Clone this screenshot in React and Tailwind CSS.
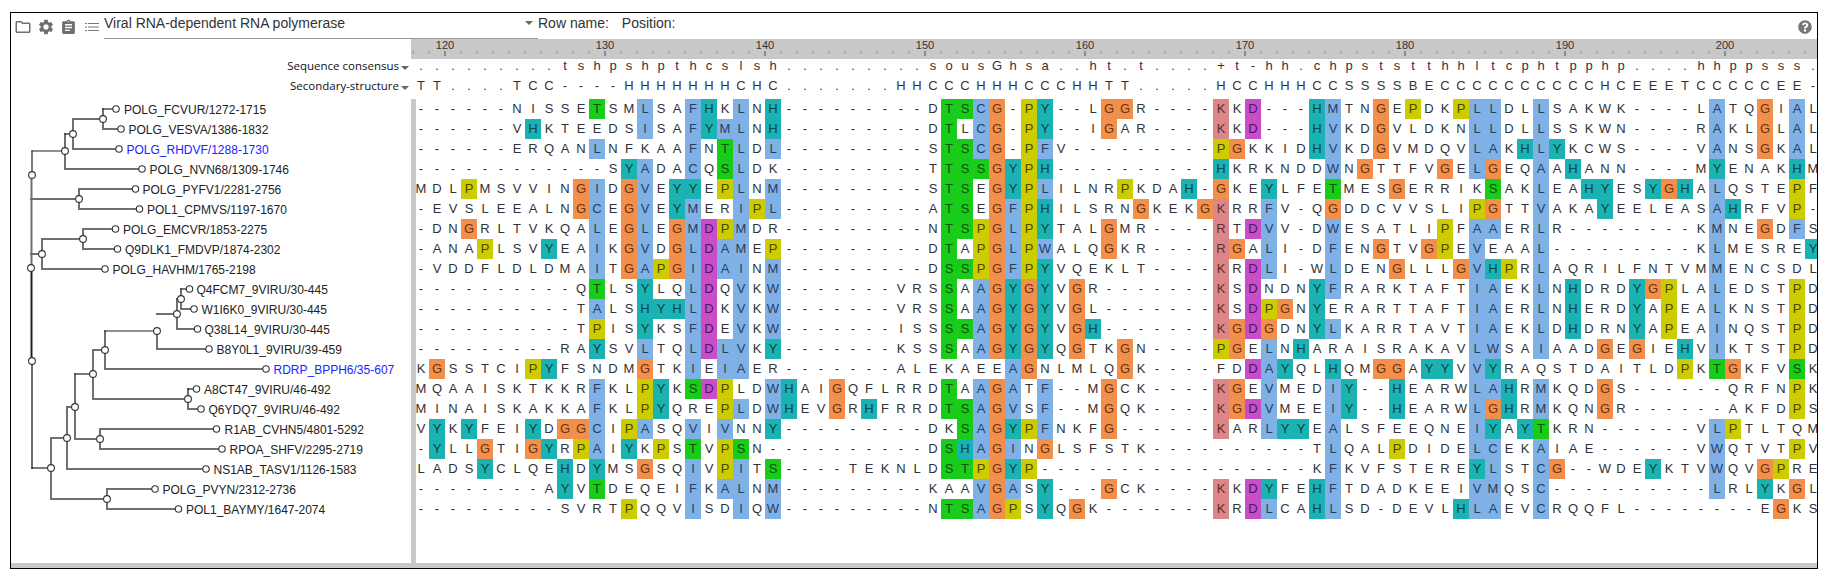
import { MdOutlineFolder, MdSettings, MdAssignment } from 'react-icons/md';
import { FaQuestionCircle } from 'react-icons/fa';

const CONSENSUS = '.........tshpshpthcslsh.........sousGhsa..ht.t....+t-hh.chpststthhltcphtpphp....hhppsss.';
const SECONDARY = 'TT....TCC----HHHHHHHCHC.......HHCCCHHHCCCHHTT.....HCCHHHCCSSSSBECCCCCCCCCCHCEEETCCCCCEE-';

// bg + letter colour per residue class
const SWATCH = {
  b: 'bg-[#80b1e6] text-[#26415f]',
  t: 'bg-[#1ab2b2] text-[#064848]',
  g: 'bg-[#19cc19] text-[#075407]',
  o: 'bg-[#f28f4a] text-[#6b3312]',
  y: 'bg-[#cccc00] text-[#4a4a00]',
  p: 'bg-[#de8588] text-[#5c2f30]',
  m: 'bg-[#c94cc9] text-[#4f1a4f]',
};

const ROWS = [
  { seq: '------NISSETSMLSAFHKLNH---------DTSCG-PY--LGGR----KKD---HMTNGEPDKPLLDLLSAKWK----LATQGIAL', g: [11, 33, 34], b: [14, 17, 20, 35, 57, 66, 67, 70, 81, 86], t: [18, 22, 39, 56], o: [36, 43, 44, 60, 84], y: [38, 62, 65], p: [50], m: [52] },
  { seq: '------VHKTEEDSISAFYMLNH---------DTLCG-PY--IGAR----KKD---HVKDGVLDKNLLDLLSSKWN----RAKLGLAL', g: [33], b: [14, 17, 19, 20, 35, 57, 66, 67, 70, 81, 86], t: [7, 18, 22, 39, 56], o: [36, 43, 60, 84], y: [38], p: [50], m: [52] },
  { seq: '------ERQANLNFKAAFNTLDL---------STSCG-PFV---------PGKKIDHVKDGVMDQVLAKHLYKCWS----VANSGKAL', g: [19, 33, 34], b: [11, 17, 20, 22, 35, 39, 57, 66, 67, 70, 81, 86], t: [56, 69, 71], o: [36, 51, 60, 84], y: [38, 50] },
  { seq: '------------SYADACQSLDK---------TTSSGYPH----------HKRKNDDWNGTTFVGELGEQAAHANN----MYENAKHM', g: [19, 33, 34, 35], b: [14, 17, 20, 57, 66, 70], t: [13, 37, 39, 50, 72, 81, 86], o: [36, 59, 64, 67], y: [38] },
  { seq: 'MDLPMSVVINGIDGVEYYEPLNM---------STSEGYPLILNRPKDAH-GKEYLFETMESGERRIKSAKLEAHYESYGHALQSTEPF', g: [33, 34, 57, 67], b: [11, 14, 20, 22, 39, 70, 81], t: [16, 17, 37, 48, 53, 73, 74, 77, 79], o: [10, 13, 36, 50, 61, 78], y: [3, 19, 38, 44, 86] },
  { seq: '-EVSLEEALNGCEGVEYMERIPL---------ATSEGFPHILSRNGKEKGKRRFV-QGDDCVVSLIPGTTVAKAYEELEASAHRFVP-', g: [33, 34], b: [11, 14, 17, 20, 22, 37, 53, 70, 81], t: [16, 39, 74, 82], o: [10, 13, 36, 45, 49, 57, 67], y: [21, 38, 66, 86], p: [50] },
  { seq: '-DNGRLTVKQALEGLEGMDPMDR---------NTSPGLPYTALGMR----RTDVV-DWESATLIPFAAERLR--------KMNEGDFS', g: [33, 34], b: [11, 14, 17, 20, 37, 53, 57, 66, 67, 70, 81, 86], t: [39], o: [3, 13, 16, 36, 43, 84], y: [19, 35, 38, 64], p: [50], m: [18, 52] },
  { seq: '-ANAPLSVYEAIKGVDGLDAMEP---------DTAPGLPWALQGKR----RGALI-DFENGTVGPEVEAAL---------KLMESREY', g: [33], b: [11, 14, 17, 19, 20, 37, 39, 53, 57, 66, 70, 81], t: [8, 87], o: [13, 16, 36, 43, 51, 60, 63], y: [4, 22, 35, 38, 64], p: [50], m: [18] },
  { seq: '-VDDFLDLDMAITGAPGIDAINM---------DSSPGFPYVQEKLT----KRDLI-WLDENGLLLGVHPRLAQRILFNTVMMENCSDL', g: [33, 34], b: [11, 14, 17, 19, 20, 22, 37, 53, 57, 66, 70, 81], t: [39, 67], o: [13, 16, 36, 61, 65], y: [15, 35, 38, 68], p: [50], m: [18, 52] },
  { seq: '----------QTLSYLQLDQVKW-------VRSSAAGYGYVGR-------KSDNDNYFRARKTAFTIAEKLNHDRDYGPLALEDSTPD', g: [11, 33], b: [17, 20, 22, 35, 57, 66, 67, 70, 81], t: [14, 37, 39, 56, 72, 76], o: [36, 38, 41, 77], y: [78, 86], p: [50], m: [18, 52] },
  { seq: '----------TALSHYHLDKVKW-------VRSSAAGYGYVGL-------KSDPGNYERARTTAFTIAERLNHERDYAPEALKNSTPD', g: [33], b: [11, 17, 20, 22, 35, 66, 67, 70, 81], t: [14, 15, 16, 37, 39, 56, 72, 76], o: [36, 38, 41, 54], y: [53, 78, 86], p: [50], m: [18, 52] },
  { seq: '----------TPISYKSFDEVKW-------ISSSSAGYGYVGH-------KGDGDNYLKARRTAVTIAEKLDHDRNYAPEAINQSTPD', g: [33, 34], b: [17, 20, 22, 35, 57, 66, 67, 70, 81], t: [14, 37, 39, 42, 56, 72, 76], o: [36, 38, 41, 51, 53], y: [11, 78, 86], p: [50], m: [18, 52] },
  { seq: '---------RAYSVLTQLDLVKY-------KSSSAAGYGYQGTKGN----PGELNHARAISRAKAVLWSAIAADGEGIEHVIKTSTPD', g: [33], b: [14, 17, 19, 20, 35, 53, 66, 67, 70, 81], t: [11, 22, 37, 39, 55, 79], o: [36, 38, 41, 44, 51, 74, 76], y: [50, 86], m: [18] },
  { seq: 'KGSSTCIPYFSNDMGTKIEIAER-------ALEKAEEAGNLMLQGK----FDDAYQLHQMGGAYYVVYRAQSTDAITLDPKTGKFVSK', g: [81, 86], b: [17, 19, 20, 37, 53, 66], t: [8, 54, 57, 63, 64, 67], o: [1, 14, 38, 44, 60, 61, 82], y: [7, 79], m: [52] },
  { seq: 'MQAAISKTKKRFKLPYKSDPLDWHAIGQFLRRDTAAGATF--MGCK----KGEVMEDIY--HEARWLAHRMKQDGS------QRFNPK', g: [17, 33], b: [11, 22, 35, 37, 39, 53, 57, 66, 67, 70], t: [15, 23, 58, 61, 68], o: [26, 36, 43, 51, 74], y: [14, 19, 86], p: [50], m: [18] },
  { seq: 'MINAISKAKKAFKLPYQREPLDWHEVGRHFRRDTSAGVSF--MGQK----KGDVMEEIY--HEARWLGHRMKQNGR------AKFDPS', g: [33, 34], b: [11, 20, 22, 35, 37, 39, 53, 57, 66, 70], t: [15, 23, 28, 58, 61, 68], o: [26, 36, 43, 51, 67, 74], y: [14, 19, 86], p: [50], m: [52] },
  { seq: 'VYKYFEIYDGGCIPASQVIVNNY---------DKSAGYPFNKFG------KARLYYEALSFEEQNEIYAYTKRN------VLPTLTQM', g: [34, 70], b: [11, 14, 17, 19, 35, 39, 53, 57, 66, 81], t: [1, 3, 7, 22, 37, 54, 55, 67, 69], o: [9, 10, 36, 43], y: [13, 38, 82], p: [50] },
  { seq: '-YLLGTIGYRPAIYKPSTVPSN----------DSHAGINGLSFSTK----------TLQALPDIDELCEKAIAE------VWQTVTPV', g: [17, 20, 33], b: [11, 35, 37, 57, 66, 67, 70, 81], t: [1, 8, 13, 34], o: [4, 7, 36, 39], y: [10, 15, 19, 61, 86] },
  { seq: 'LADSYCLQEHDYMSGSQIVPITS----TEKNLDSTPGYP-----------------KFKVFSTEREYLSTCG--WDEYKTVWQVGPRE', g: [22, 33, 34], b: [17, 20, 57, 67, 70, 81], t: [4, 9, 11, 37, 66, 77], o: [14, 36, 71, 84], y: [19, 35, 38, 85] },
  { seq: '--------AYVTDEQEIFKALNM---------KAAVGASY---GCK----KKDYFEHFTDADKEEIVMQSC----------LRLYKGL', g: [11], b: [17, 19, 20, 22, 35, 37, 57, 66, 67, 70, 81], t: [9, 39, 53, 56, 84], o: [36, 43, 86], p: [50], m: [52] },
  { seq: '---------SVRTPQQVISDIQW---------NTSAGPSYQGK-------KRDLCAHLSD-DEVLHLAEVCRQQFL--------EGKS', g: [33, 34], b: [17, 20, 22, 35, 53, 57, 66, 67, 70], t: [39, 56, 65], o: [36, 41, 85], y: [13, 37], p: [50], m: [52] },
];

const LEAVES = [
  ['POLG_FCVUR/1272-1715', 116, 109, 124],
  ['POLG_VESVA/1386-1832', 121, 129, 128.5],
  ['POLG_RHDVF/1288-1730', 119, 149, 126.5, true],
  ['POLG_NVN68/1309-1746', 142, 169, 149.5],
  ['POLG_PYFV1/2281-2756', 135.5, 189, 142.5],
  ['POL1_CPMVS/1197-1670', 139.5, 209, 147],
  ['POLG_EMCVR/1853-2275', 115.5, 229, 123],
  ['Q9DLK1_FMDVP/1874-2302', 117.5, 249, 125],
  ['POLG_HAVHM/1765-2198', 105, 269, 112.5],
  ['Q4FCM7_9VIRU/30-445', 189.5, 289, 196.5],
  ['W1I6K0_9VIRU/30-445', 194, 309, 201.5],
  ['Q38L14_9VIRU/30-445', 197.5, 329, 204.5],
  ['B8Y0L1_9VIRU/39-459', 209, 349, 216.5],
  ['RDRP_BPPH6/35-607', 266, 369, 273.5, true],
  ['A8CT47_9VIRU/46-492', 196.5, 389, 204],
  ['Q6YDQ7_9VIRU/46-492', 201, 409, 208.5],
  ['R1AB_CVHN5/4801-5292', 216.5, 429, 224.5],
  ['RPOA_SHFV/2295-2719', 222, 449, 229.5],
  ['NS1AB_TASV1/1126-1583', 206, 469, 213.5],
  ['POLG_PVYN/2312-2736', 155, 489, 162.5],
  ['POL1_BAYMY/1647-2074', 178.5, 509, 186],
];

// internal nodes of the tree
const NODES = [
  [103, 119], [73, 134], [65, 151], [79, 199], [32, 175], [83, 239], [42, 254], [31, 268], [32, 361],
  [181, 299], [177, 314], [157, 331], [105, 350], [93, 374], [188, 399], [75, 407], [100, 439], [67, 438], [51, 468], [107, 499],
];

// x1 y1 x2 y2, heavy grey
const THICK = [
  [103, 109, 103, 129], [103, 129, 121, 129],
  [73, 119, 73, 149], [73, 119, 103, 119], [73, 149, 119, 149],
  [65, 134, 65, 169], [65, 169, 142, 169],
  [79, 189, 79, 209], [79, 189, 135, 189], [79, 209, 139, 209], [31, 199, 79, 199],
  [83, 229, 83, 249], [83, 229, 115, 229], [83, 249, 117, 249],
  [42, 239, 42, 269], [42, 239, 83, 239], [42, 269, 105, 269], [31, 254, 42, 254],
  [31.5, 175, 31.5, 268], [32, 361, 32, 468],
  [181, 289, 181, 309], [181, 309, 194, 309],
  [177, 299, 177, 329], [177, 329, 197, 329], [157, 314, 177, 314],
  [157, 331, 157, 349], [157, 349, 209, 349],
  [105, 331, 105, 369], [105, 369, 266, 369],
  [93, 350, 93, 399], [93, 399, 188, 399], [93, 350, 105, 350],
  [188, 389, 188, 409], [188, 409, 201, 409],
  [75, 374, 75, 439], [75, 439, 100, 439],
  [100, 429, 100, 449], [100, 429, 216, 429], [100, 449, 222, 449],
  [67, 407, 67, 469], [67, 469, 206, 469], [67, 407, 75, 407],
  [51, 438, 51, 499], [51, 438, 67, 438], [51, 499, 107, 499],
  [107, 489, 107, 509], [107, 489, 155, 489], [107, 509, 178, 509],
];

// x1 y1 x2 y2, thin black
const THIN = [
  [103, 109, 116, 109], [65, 134, 73, 134], [32, 151, 65, 151], [32, 151, 32, 175],
  [181, 289, 189, 289], [177, 299, 181, 299], [105, 331, 157, 331], [75, 374, 93, 374],
  [188, 389, 196, 389], [32, 468, 51, 468],
];

function Arrow() {
  return <span className="inline-block w-0 h-0 border-x-[4px] border-t-[4px] border-x-transparent border-t-[#666]" />;
}

function Toolbar() {
  return (
    <div className="flex items-start h-[26px] shrink-0 pl-[3px] text-[14px] leading-[20px] text-[#333]">
      <div className="flex items-center h-[26px] pt-[2px] text-[#6f6f6f]">
        <MdOutlineFolder size={18} />
        <MdSettings size={18} className="ml-[5px]" />
        <MdAssignment size={17} className="ml-[5px]" />
        <svg width="14" height="8" viewBox="0 0 14 8" className="ml-[8px]" fill="#777">
          <rect x="0" y="0" width="2" height="1" />
          <rect x="3" y="0" width="11" height="1" />
          <rect x="0" y="3.5" width="2" height="1" />
          <rect x="3" y="3.5" width="11" height="1" />
          <rect x="0" y="7" width="2" height="1" />
          <rect x="3" y="7" width="11" height="1" />
        </svg>
      </div>
      <div className="flex items-start justify-between w-[434px] h-[26px] ml-[5px] border-b border-[#999]">
        <span>Viral RNA-dependent RNA polymerase</span>
        <span className="mt-[8px] mr-[5px] flex"><Arrow /></span>
      </div>
      <span>Row name:</span>
      <span className="ml-[13px]">Position:</span>
      <div className="ml-auto mr-[5px] h-[26px] flex items-center pt-[1px] text-[#777]">
        <FaQuestionCircle size={14} />
      </div>
    </div>
  );
}

function Ruler() {
  return (
    <div className="flex h-[20px] shrink-0">
      <div className="w-[400px] shrink-0" />
      <div className="flex-1 min-w-0 overflow-hidden bg-[#c8c8c8] pl-[2px] flex">
        {Array.from({ length: 88 }, (_, i) => {
          const major = (i - 2) % 10 === 0;
          return (
            <div key={i} className="relative w-4 shrink-0">
              {major ? (
                <>
                  <span className="absolute left-0 top-0 -translate-x-1/2 text-[11px] leading-[12px] text-[#333]">{118 + i}</span>
                  <span className="absolute -left-px top-[12px] w-[2px] h-[5px] bg-[#8c8c8c]" />
                </>
              ) : (
                <span className="absolute -left-px top-[12px] w-[2px] h-[3px] bg-[#aaa]" />
              )}
            </div>
          );
        })}
      </div>
    </div>
  );
}

function AnnotationRow({ label, text, height, leading }) {
  return (
    <div className={`flex shrink-0 text-[#333] ${height}`}>
      <div className={`w-[400px] shrink-0 flex justify-end items-center self-start pr-[2px] text-[#111] font-['Open_Sans',sans-serif] text-[11.5px] ${leading}`}>
        <span>{label}</span>
        <span className="ml-[2px] mt-[3px] flex"><Arrow /></span>
      </div>
      <div className="flex-1 min-w-0 overflow-hidden pl-[2px]">
        <div className={`flex text-[13px] ${leading}`}>
          {text.split('').map((ch, i) => (
            <span key={i} className="w-4 shrink-0 text-center">{ch}</span>
          ))}
        </div>
      </div>
    </div>
  );
}

function SeqRow({ row }) {
  const tone = {};
  for (const key of Object.keys(SWATCH)) {
    for (const i of row[key] || []) tone[i] = SWATCH[key];
  }
  return (
    <div className="flex h-5 text-[13px] leading-5">
      {row.seq.split('').map((ch, i) => (
        <span key={i} className={`w-4 shrink-0 text-center ${tone[i] || 'text-[#333]'}`}>{ch}</span>
      ))}
    </div>
  );
}

function Tree() {
  return (
    <svg width="400" height="464" viewBox="11 99 400 464" className="shrink-0 block">
      {THICK.map(([x1, y1, x2, y2], i) => (
        <line key={i} x1={x1} y1={y1} x2={x2} y2={y2} stroke="#707070" strokeWidth="2" strokeLinecap="square" />
      ))}
      {THIN.map(([x1, y1, x2, y2], i) => (
        <line key={i} x1={x1} y1={y1} x2={x2} y2={y2} stroke="#222" strokeWidth="1.2" strokeLinecap="square" />
      ))}
      <line x1="31.5" y1="268" x2="31.5" y2="361" stroke="#222" strokeWidth="2" />
      {NODES.map(([cx, cy], i) => (
        <circle key={i} cx={cx} cy={cy} r="3.4" fill="#fff" stroke="#333" strokeWidth="1.1" />
      ))}
      {LEAVES.map(([name, cx, cy, tx, blue]) => (
        <g key={name}>
          <circle cx={cx} cy={cy} r="3.2" fill="#fff" stroke="#333" strokeWidth="1.1" />
          <text x={tx} y={cy + 5} fontSize="12" fill={blue ? '#2222ff' : '#222'}>{name}</text>
        </g>
      ))}
    </svg>
  );
}

export default function App() {
  return (
    <div className="pt-[12px] pl-[10px] font-['Liberation_Sans',Arial,sans-serif]">
      <div className="flex flex-col w-[1808px] h-[557px] border-t border-x border-b border-black overflow-hidden bg-white">
        <Toolbar />
        <Ruler />
        <AnnotationRow label="Sequence consensus" text={CONSENSUS} height="h-[17px]" leading="leading-[14px]" />
        <AnnotationRow label="Secondary-structure" text={SECONDARY} height="h-[20px]" leading="leading-[20px]" />
        <div className="flex flex-1 min-h-0 mt-[3px]">
          <Tree />
          <div className="relative z-10 w-[5px] shrink-0 bg-[#c8c8c8]" />
          <div className="flex-1 min-w-0 overflow-hidden -ml-[3px]">
            {ROWS.map((row, i) => (
              <SeqRow key={i} row={row} />
            ))}
          </div>
        </div>
        <div className="h-[5px] shrink-0 bg-[#c8c8c8]" />
      </div>
    </div>
  );
}
